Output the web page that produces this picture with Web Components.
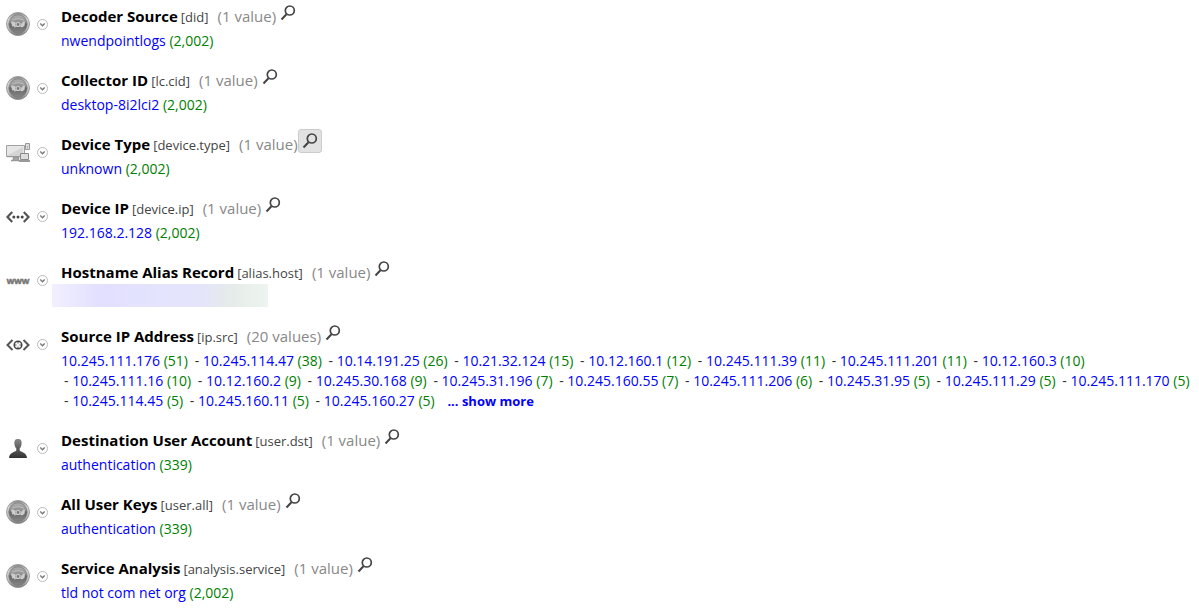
<!DOCTYPE html>
<html lang="en">
<head>
<meta charset="utf-8">
<title>Investigation values</title>
<style>
body { margin: 0; background: #fff; color: #333; font: 14px/20px "Open Sans", "Noto Sans", sans-serif; }
</style>
</head>
<body>
<main>
  <meta-group icon="decoder" name="Decoder Source" key="did" count="1 value"><meta-value hits="2,002">nwendpointlogs</meta-value></meta-group>
  <meta-group icon="decoder" name="Collector ID" key="lc.cid" count="1 value"><meta-value hits="2,002">desktop-8i2lci2</meta-value></meta-group>
  <meta-group icon="devices" name="Device Type" key="device.type" count="1 value" active><meta-value hits="2,002">unknown</meta-value></meta-group>
  <meta-group icon="ip" name="Device IP" key="device.ip" count="1 value"><meta-value hits="2,002">192.168.2.128</meta-value></meta-group>
  <meta-group icon="www" name="Hostname Alias Record" key="alias.host" count="1 value"><redacted-value></redacted-value></meta-group>
  <meta-group icon="source" name="Source IP Address" key="ip.src" count="20 values">
    <meta-value hits="51">10.245.111.176</meta-value>
    <meta-value sep hits="38">10.245.114.47</meta-value>
    <meta-value sep hits="26">10.14.191.25</meta-value>
    <meta-value sep hits="15">10.21.32.124</meta-value>
    <meta-value sep hits="12">10.12.160.1</meta-value>
    <meta-value sep hits="11">10.245.111.39</meta-value>
    <meta-value sep hits="11">10.245.111.201</meta-value>
    <meta-value sep hits="10">10.12.160.3</meta-value>
    <meta-value sep hits="10">10.245.111.16</meta-value>
    <meta-value sep hits="9">10.12.160.2</meta-value>
    <meta-value sep hits="9">10.245.30.168</meta-value>
    <meta-value sep hits="7">10.245.31.196</meta-value>
    <meta-value sep hits="7">10.245.160.55</meta-value>
    <meta-value sep hits="6">10.245.111.206</meta-value>
    <meta-value sep hits="5">10.245.31.95</meta-value>
    <meta-value sep hits="5">10.245.111.29</meta-value>
    <meta-value sep hits="5">10.245.111.170</meta-value>
    <meta-value sep hits="5">10.245.114.45</meta-value>
    <meta-value sep hits="5">10.245.160.11</meta-value>
    <meta-value sep hits="5">10.245.160.27</meta-value>
    <show-more>... show more</show-more>
  </meta-group>
  <meta-group icon="user" name="Destination User Account" key="user.dst" count="1 value"><meta-value hits="339">authentication</meta-value></meta-group>
  <meta-group icon="decoder" name="All User Keys" key="user.all" count="1 value"><meta-value hits="339">authentication</meta-value></meta-group>
  <meta-group icon="decoder" name="Service Analysis" key="analysis.service" count="1 value"><meta-value hits="2,002">tld not com net org</meta-value></meta-group>
</main>

<script>
const ICONS = {
  decoder: `<defs>
      <linearGradient id="rim" x1="0" y1="0" x2="0" y2="1"><stop offset="0" stop-color="#8a8a8a"/><stop offset=".3" stop-color="#d8d8d8"/><stop offset=".7" stop-color="#bbb"/><stop offset="1" stop-color="#777"/></linearGradient>
      <linearGradient id="disc" x1="0" y1="0" x2="0" y2="1"><stop offset="0" stop-color="#b0b0b0"/><stop offset=".4" stop-color="#919191"/><stop offset=".5" stop-color="#666"/><stop offset="1" stop-color="#858585"/></linearGradient></defs>
    <circle cx="12" cy="12" r="11.5" fill="url(#rim)" stroke="#888" stroke-width=".7"/>
    <circle cx="12" cy="12" r="9.2" fill="url(#disc)" stroke="#777" stroke-width=".7"/>
    <path d="M6 8Q12 5 18 8" fill="none" stroke="#bbb" stroke-width="1"/>
    <path d="M5 9.500l3 .2 2 1.300-.8 1.500.8 2.500-1.500.5-1-1.500-1 .8L5.500 12z" fill="#ccc"/>
    <path d="M19 9.500l-2.500.3-.5 2-1.500-1.200.3 2.400-.8 2 2.500.3 2-1.500z" fill="#ccc"/>
    <circle cx="12" cy="12.500" r="2" fill="#777" stroke="#d0d0d0" stroke-width="1.200"/>`,
  devices: `<path d="M.5 5.500h18v11H.500z" fill="#e6e6e6" stroke="#a2a2a2"/><path d="M2 15L17 7v8z" fill="#d4d4d4"/>
    <path d="M1 16.500h13M7.500 17.500h5v3h-5zM5 20.500h8" fill="#aaa" stroke="#999" stroke-width="1.500"/>
    <path d="M19.500 3.500h4v6h-4z" fill="#ddd" stroke="#999"/><path d="M21 7h1" stroke="#888"/>
    <path d="M14.500 13.500h8v6h-8z" fill="#ddd" stroke="#8a8a8a"/><path d="M13 21h11" stroke="#999" stroke-width="2"/>`,
  ip: `<path d="M6.200 8L1.500 13l4.700 5M17.800 8l4.700 5-4.700 5" fill="none" stroke="#555" stroke-width="2.200"/><g fill="#444"><circle cx="7.800" cy="13" r="1.500"/><circle cx="12" cy="13" r="1.500"/><circle cx="16.200" cy="13" r="1.500"/></g>`,
  www: `<text x="12" y="16" text-anchor="middle" font-family="Liberation Sans, sans-serif" font-size="8" font-weight="700" fill="#777" stroke="#777" stroke-width=".6">WWW</text>`,
  source: `<path d="M6.500 8L1.500 13l5 5M17.500 8l5 5-5 5" fill="none" stroke="#555" stroke-width="2"/><circle cx="12" cy="13" r="3.800" fill="none" stroke="#444" stroke-width="1.500"/><path d="M12 9v2.500M12 14.500V17M8 13h2.500M13.500 13H16" stroke="#444" stroke-width="1"/>`,
  user: `<defs><linearGradient id="bust" x1="0" y1="0" x2="0" y2="1"><stop offset="0" stop-color="#888"/><stop offset="1" stop-color="#333"/></linearGradient></defs>
    <path d="M12 3C8.800 3 8 5 8.500 8.500c.3 2 1 3 1.800 4v2C9.500 16 3 16.500 3 22h18c0-5.500-6.500-6-7.300-7.500v-2c.8-1 1.500-2 1.800-4C16 5 15.200 3 12 3z" fill="url(#bust)"/>`
};

function define(name, render) {
  customElements.define(name, class extends HTMLElement {
    connectedCallback() {
      if (this.shadowRoot) return;
      this.attachShadow({ mode: 'open' }).innerHTML = render(this);
    }
  });
}

define('meta-icon', el => `
  <style>:host { display: block; width: 24px; height: 24px; } svg { display: block; overflow: visible; }</style>
  <svg width="24" height="24" viewBox="0 0 24 24" aria-hidden="true">${ICONS[el.getAttribute('type')]}</svg>`);

define('caret-button', () => `
  <style>
    :host { display: block; }
    button { display: block; width: 11px; height: 11px; padding: 0; border: 0; background: none; }
    svg { display: block; }
  </style>
  <button type="button" aria-label="Options"><svg width="11" height="11" viewBox="0 0 11 11">
    <circle cx="5.500" cy="5.500" r="5" fill="#fff" stroke="#bbb"/><path d="M3.300 4.500l2.200 2.300 2.200-2.300" fill="none" stroke="#777" stroke-width="1.300"/></svg></button>`);

define('search-button', () => `
  <style>
    :host { display: block; }
    button { box-sizing: border-box; display: block; width: 24px; height: 24px; padding: 3px; border: 1px solid transparent; border-radius: 3px; background: none; }
    :host([active]) button { border-color: #ccc; background: #e2e2e2; }
    svg { display: block; }
  </style>
  <button type="button" aria-label="Search values"><svg width="16" height="16" viewBox="0 0 16 16">
    <circle cx="9.800" cy="5.500" r="4.500" fill="none" stroke="#444" stroke-width="1.700"/><path d="M6.500 9.200L1.500 14.500" stroke="#444" stroke-width="2"/></svg></button>`);

define('meta-value', el => `
  <style>
    :host { display: inline-block; white-space: nowrap; }
    :host([sep]) { padding-left: 3px; }
    a { color: #00f; text-decoration: none; }
    .hits { color: #008000; }
  </style>${el.hasAttribute('sep') ? '- ' : ''}<a href="#"><slot></slot></a> <span class="hits">(${el.getAttribute('hits')})</span>`);

define('show-more', () => `
  <style>
    :host { display: inline-block; margin-left: 9px; font-size: 13px; font-weight: 700; }
    a { color: #00f; text-decoration: none; }
  </style><a href="#"><slot></slot></a>`);

define('redacted-value', () => `
  <style>
    :host { display: block; width: 216px; height: 23px; margin: -3px 0 0 -9px;
      background: linear-gradient(90deg, #f2f0ff, #e2dfff 22%, #e4e4fe 50%, #e4e4fb 68%, #e6ece9 84%, #eef5f0); }
  </style>`);

define('meta-group', el => `
  <style>
    :host { display: grid; grid-template-columns: 24px 11px 1fr; column-gap: 7px; padding: 0 8px 12px 6px; }
    meta-icon { margin-top: 12px; }
    caret-button { margin-top: 19px; }
    .body { padding-left: 6px; }
    header { display: flex; align-items: baseline; height: 31px; white-space: nowrap; line-height: 32px; }
    h2 { margin: 0; color: #000; font-size: 15px; font-weight: 700; }
    .key { margin-left: 3px; font-size: 13px; color: #444; }
    .count { margin-left: 9px; font-size: 15px; color: #888; }
    search-button { align-self: flex-start; margin-top: 1px; }
    .values { padding-bottom: 1px; }
  </style>
  <meta-icon type="${el.getAttribute('icon')}"></meta-icon>
  <caret-button></caret-button>
  <div class="body">
    <header><h2>${el.getAttribute('name')}</h2><span class="key">[${el.getAttribute('key')}]</span><span class="count">(${el.getAttribute('count')})</span><search-button ${el.hasAttribute('active') ? 'active' : ''}></search-button></header>
    <div class="values"><slot></slot></div>
  </div>`);
</script>
</body>
</html>
